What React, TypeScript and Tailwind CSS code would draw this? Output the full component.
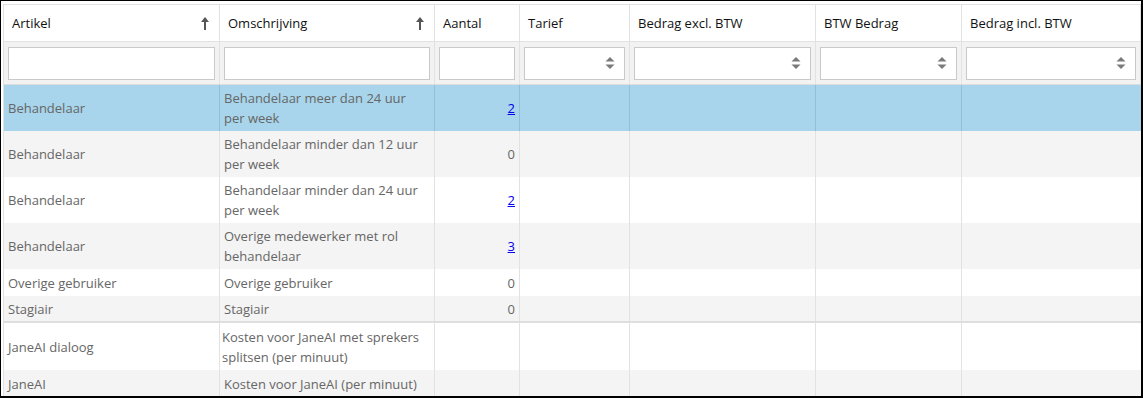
import React from "react";

const COLS = "grid grid-cols-[216px_215px_85px_110px_186px_146px_1fr]";

function SortArrow() {
  return (
    <svg width="8" height="13" viewBox="0 0 8 13" className="shrink-0">
      <polygon points="4,0 8,5 0,5" fill="#555" />
      <rect x="3" y="4" width="2" height="9" fill="#555" />
    </svg>
  );
}

function Spinner() {
  return (
    <svg width="10" height="14" viewBox="0 0 10 14">
      <polygon points="5,1 9.5,5.5 0.5,5.5" fill="#7a7a7a" />
      <polygon points="0.5,8.5 9.5,8.5 5,13" fill="#7a7a7a" />
    </svg>
  );
}

type Row = {
  a: string;
  b: string;
  n?: string;
  link?: boolean;
  h: string;
  bg: string;
  selected?: boolean;
  divider?: boolean;
};

const rows: Row[] = [
  { a: "Behandelaar", b: "Behandelaar meer dan 24 uur per week", n: "2", link: true, h: "h-[46px]", bg: "bg-[#a8d5eb]", selected: true },
  { a: "Behandelaar", b: "Behandelaar minder dan 12 uur per week", n: "0", h: "h-[46px]", bg: "bg-[#f4f4f4]" },
  { a: "Behandelaar", b: "Behandelaar minder dan 24 uur per week", n: "2", link: true, h: "h-[46px]", bg: "bg-white" },
  { a: "Behandelaar", b: "Overige medewerker met rol behandelaar", n: "3", link: true, h: "h-[46px]", bg: "bg-[#f4f4f4]" },
  { a: "Overige gebruiker", b: "Overige gebruiker", n: "0", h: "h-[27px]", bg: "bg-white" },
  { a: "Stagiair", b: "Stagiair", n: "0", h: "h-[25px]", bg: "bg-[#f4f4f4]" },
  { a: "JaneAI dialoog", b: "Kosten voor JaneAI met sprekers splitsen (per minuut)", h: "h-[49px]", bg: "bg-white", divider: true },
  { a: "JaneAI", b: "Kosten voor JaneAI (per minuut)", h: "h-[28px]", bg: "bg-[#f4f4f4]" },
];

export default function App() {
  const headers = ["Artikel", "Omschrijving", "Aantal", "Tarief", "Bedrag excl. BTW", "BTW Bedrag", "Bedrag incl. BTW"];
  return (
    <div
      className="w-[1143px] h-[398px] overflow-hidden bg-white border-t border-l border-r-2 border-b-2 border-black pt-[3px] pl-[2px]"
      style={{ fontFamily: '"Open Sans", "Noto Sans", sans-serif' }}
    >
      <div className="border-t border-l border-[#e2e2e2] text-[13px] leading-[20px]">
        {/* header */}
        <div className={`${COLS} h-[37px] bg-white border-b border-[#e2e2e2]`}>
          {headers.map((h, i) => (
            <div key={h} className="border-r border-[#e2e2e2] flex items-center justify-between pl-[8px] pr-[10px] text-[#111]">
              <span>{h}</span>
              {i < 2 && <SortArrow />}
            </div>
          ))}
        </div>
        {/* filter row */}
        <div className={`${COLS} h-[43px] bg-[#f2f2f2] border-b border-[#dcdcdc]`}>
          {headers.map((h, i) => (
            <div key={h} className="border-r border-[#e2e2e2] flex items-center px-[4px]">
              <div className="w-full h-[33px] bg-white border border-[#c9c9c9] flex items-center justify-end pr-[9px]">
                {i >= 3 && <Spinner />}
              </div>
            </div>
          ))}
        </div>
        {/* data rows */}
        {rows.map((r, idx) => (
          <div key={idx} className={`${COLS} ${r.h} ${r.bg} text-[#666] ${r.divider ? "border-t-2 border-[#dedede]" : ""}`}>
            <div className={`border-r ${r.selected ? "border-[#91bfd6]" : "border-[#e2e2e2]"} flex items-center px-[4px]`}>
              {r.a}
            </div>
            <div className={`border-r ${r.selected ? "border-[#91bfd6]" : "border-[#e2e2e2]"} flex items-center ${r.divider ? "pl-[2px]" : "pl-[4px]"} pr-[12px]`}>
              <span>{r.b}</span>
            </div>
            <div className={`border-r ${r.selected ? "border-[#91bfd6]" : "border-[#e2e2e2]"} flex items-center justify-end px-[4px]`}>
              {r.n !== undefined &&
                (r.link ? (
                  <span className="text-[#0000ee] underline">{r.n}</span>
                ) : (
                  <span>{r.n}</span>
                ))}
            </div>
            <div className={`border-r ${r.selected ? "border-[#91bfd6]" : "border-[#e2e2e2]"}`} />
            <div className={`border-r ${r.selected ? "border-[#91bfd6]" : "border-[#e2e2e2]"}`} />
            <div className={`border-r ${r.selected ? "border-[#91bfd6]" : "border-[#e2e2e2]"}`} />
            <div />
          </div>
        ))}
      </div>
    </div>
  );
}
